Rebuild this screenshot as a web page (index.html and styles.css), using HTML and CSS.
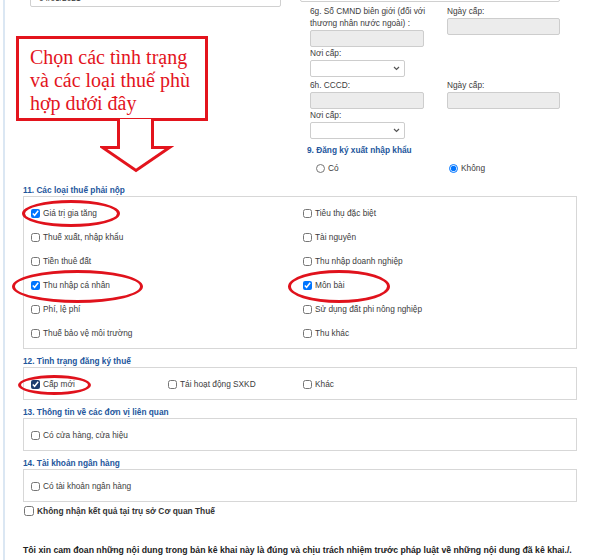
FILE: index.html
```html
<!DOCTYPE html>
<html lang="vi">
<head>
    <meta charset="UTF-8">
    <meta name="viewport" content="width=device-width, initial-scale=1.0">
    <title>Tờ khai đăng ký thuế</title>
    <link rel="stylesheet" href="styles.css">
</head>
<body>
    <div class="page">
        <div class="top-grid">
            <div class="col-left">
                <div class="prev-input date">04/05/2021</div>
            </div>
            <div class="col-right">
                <div class="prev-input wide"></div>
                <div class="fields">
                    <div class="field-row">
                        <div class="field">
                            <label class="two-lines">6g. Số CMND biên giới (đối với<br>thương nhân nước ngoài) :</label>
                            <input class="input" type="text" disabled>
                        </div>
                        <div class="field">
                            <label>Ngày cấp:</label>
                            <input class="input" type="text" disabled>
                        </div>
                    </div>
                    <div class="field">
                        <label>Nơi cấp:</label>
                        <div class="select">
                            <svg width="7" height="5" viewBox="0 0 7 5"><path d="M1 1l2.5 2.5L6 1" fill="none" stroke="#555" stroke-width="1.2"/></svg>
                        </div>
                    </div>
                    <div class="field-row second">
                        <div class="field">
                            <label>6h. CCCD:</label>
                            <input class="input" type="text" disabled>
                        </div>
                        <div class="field">
                            <label>Ngày cấp:</label>
                            <input class="input" type="text" disabled>
                        </div>
                    </div>
                    <div class="field">
                        <label>Nơi cấp:</label>
                        <div class="select">
                            <svg width="7" height="5" viewBox="0 0 7 5"><path d="M1 1l2.5 2.5L6 1" fill="none" stroke="#555" stroke-width="1.2"/></svg>
                        </div>
                    </div>
                </div>
                <h4 class="sec-title">9. Đăng ký xuất nhập khẩu</h4>
                <div class="radio-row">
                    <label class="opt"><input type="radio" name="xnk"> Có</label>
                    <label class="opt"><input type="radio" name="xnk" checked> Không</label>
                </div>
            </div>
        </div>

        <div class="section">
            <h4 class="sec-title">11. Các loại thuế phải nộp</h4>
            <div class="section-box cols-2">
                <label class="opt"><input type="checkbox" checked> Giá trị gia tăng</label>
                <label class="opt"><input type="checkbox"> Tiêu thụ đặc biệt</label>
                <label class="opt"><input type="checkbox"> Thuế xuất, nhập khẩu</label>
                <label class="opt"><input type="checkbox"> Tài nguyên</label>
                <label class="opt"><input type="checkbox"> Tiền thuê đất</label>
                <label class="opt"><input type="checkbox"> Thu nhập doanh nghiệp</label>
                <label class="opt"><input type="checkbox" checked> Thu nhập cá nhân</label>
                <label class="opt"><input type="checkbox" checked> Môn bài</label>
                <label class="opt"><input type="checkbox"> Phí, lệ phí</label>
                <label class="opt"><input type="checkbox"> Sử dụng đất phi nông nghiệp</label>
                <label class="opt"><input type="checkbox"> Thuế bảo vệ môi trường</label>
                <label class="opt"><input type="checkbox"> Thu khác</label>
            </div>
        </div>

        <div class="section">
            <h4 class="sec-title">12. Tình trạng đăng ký thuế</h4>
            <div class="section-box cols-3">
                <label class="opt"><input class="focused" type="checkbox" checked> Cấp mới</label>
                <label class="opt"><input type="checkbox"> Tái hoạt động SXKD</label>
                <label class="opt"><input type="checkbox"> Khác</label>
            </div>
        </div>

        <div class="section">
            <h4 class="sec-title">13. Thông tin về các đơn vị liên quan</h4>
            <div class="section-box">
                <label class="opt"><input type="checkbox"> Có cửa hàng, cửa hiệu</label>
            </div>
        </div>

        <div class="section">
            <h4 class="sec-title">14. Tài khoản ngân hàng</h4>
            <div class="section-box">
                <label class="opt"><input type="checkbox"> Có tài khoản ngân hàng</label>
            </div>
        </div>

        <label class="no-result"><input type="checkbox"> Không nhận kết quả tại trụ sở Cơ quan Thuế</label>

        <p class="declaration">Tôi xin cam đoan những nội dung trong bản kê khai này là đúng và chịu trách nhiệm trước pháp luật về những nội dung đã kê khai./.</p>

        <!-- chú thích hướng dẫn -->
        <div class="callout">Chọn các tình trạng<br>và các loại thuế phù<br>hợp dưới đây</div>
        <svg class="callout-arrow" width="74" height="56" viewBox="0 0 74 56">
            <polyline points="18.5,0 18.5,28.5 2.5,28.5 36,51.5 69.5,28.5 52.5,28.5 52.5,0" fill="#fff" stroke="#e3141d" stroke-width="3"/>
        </svg>
        <span class="mark mark-gtgt"></span>
        <span class="mark mark-tncn"></span>
        <span class="mark mark-monbai"></span>
        <span class="mark mark-capmoi"></span>
    </div>
</body>
</html>
```

FILE: styles.css
```css
* {
    margin: 0;
    padding: 0;
    box-sizing: border-box;
}

body {
    font-family: "Liberation Sans", Arial, sans-serif;
    font-size: 8.3px;
    color: #3c3c3c;
    background: #fff;
    overflow: hidden;
}

.page {
    position: relative;
    margin-left: 3px;
    border-left: 2px solid #dbe7f3;
    padding: 0 23px 0 18px;
    min-height: 560px;
}

/* phần trên: các ô của mục 6 */
.top-grid {
    display: grid;
    grid-template-columns: 277px 277px;
    align-items: start;
    padding-bottom: 9.5px;
}

.prev-input {
    height: 20px;
    border: 1px solid #d0d0d0;
    border-radius: 2px;
    background: #fff;
}

.prev-input.date {
    margin: -13px 0 0 7px;
    width: 251px;
    padding: 0 8px;
    line-height: 20px;
    color: #333;
}

.prev-input.wide {
    margin-top: -18px;
    width: 260px;
}

.fields {
    padding-left: 10px;
    margin-top: 2.5px;
}

.field-row {
    display: grid;
    grid-template-columns: 114px 113px;
    column-gap: 23px;
}

.field-row.second {
    margin-top: 2px;
}

.field label {
    display: block;
    line-height: 13px;
    white-space: nowrap;
}

.field label.two-lines {
    line-height: 12.5px;
}

.input {
    display: block;
    width: 100%;
    height: 17px;
    border: 1px solid #cdcdcd;
    border-radius: 2px;
    background: #ececec;
}

.select {
    width: 95px;
    height: 17px;
    border: 1px solid #cdcdcd;
    border-radius: 2px;
    background: #fff;
    display: flex;
    align-items: center;
    justify-content: flex-end;
    padding-right: 4px;
}

.sec-title {
    font-size: 8.3px;
    font-weight: bold;
    color: #23569c;
    line-height: 12px;
}

.col-right .sec-title {
    margin: 5px 0 0 7px;
    line-height: 13px;
}

.radio-row {
    display: grid;
    grid-template-columns: 133px auto;
    padding-left: 16px;
    margin-top: 5px;
}

.radio-row .opt {
    height: 13px;
}

/* các khung lựa chọn */
.section + .section {
    margin-top: 6px;
}

.section-box {
    display: grid;
    border: 1px solid #d7d7d7;
    padding: 4px 0 3px 7px;
}

.cols-2 {
    grid-template-columns: 272px 1fr;
}

.cols-3 {
    grid-template-columns: 137px 135px 1fr;
}

.opt {
    display: flex;
    align-items: center;
    gap: 2px;
    height: 24px;
    white-space: nowrap;
}

.opt input {
    width: 9px;
    height: 9px;
    margin: 0 1px 0 0;
}

.opt input.focused {
    accent-color: #1d3c6e;
}

.no-result {
    display: flex;
    align-items: center;
    gap: 2px;
    margin-top: 3px;
    padding-left: 1px;
    line-height: 12px;
    font-weight: bold;
    font-size: 8.4px;
    color: #333;
}

.no-result input {
    width: 10px;
    height: 10px;
    margin: 0 1px 0 0;
}

.declaration {
    margin-top: 27px;
    line-height: 12px;
    font-size: 8.7px;
    font-weight: bold;
    color: #222;
    white-space: nowrap;
}

/* chú thích màu đỏ */
.callout {
    position: absolute;
    left: 11px;
    top: 36px;
    width: 192px;
    height: 85px;
    border: 3px solid #e3141d;
    background: #fff;
    padding: 6.5px 0 0 11px;
    font-family: "Liberation Serif", "Times New Roman", serif;
    font-size: 20px;
    line-height: 23px;
    color: #e3141d;
}

.callout-arrow {
    position: absolute;
    left: 95px;
    top: 119px;
}

.mark {
    position: absolute;
    border: 3px solid #e0121c;
    border-radius: 50%;
}

.mark-gtgt {
    left: 17px;
    top: 200px;
    width: 98px;
    height: 27px;
}

.mark-tncn {
    left: 7px;
    top: 270px;
    width: 131px;
    height: 33px;
}

.mark-monbai {
    left: 283px;
    top: 270px;
    width: 102px;
    height: 33px;
}

.mark-capmoi {
    left: 13px;
    top: 375px;
    width: 73px;
    height: 20px;
}
```
